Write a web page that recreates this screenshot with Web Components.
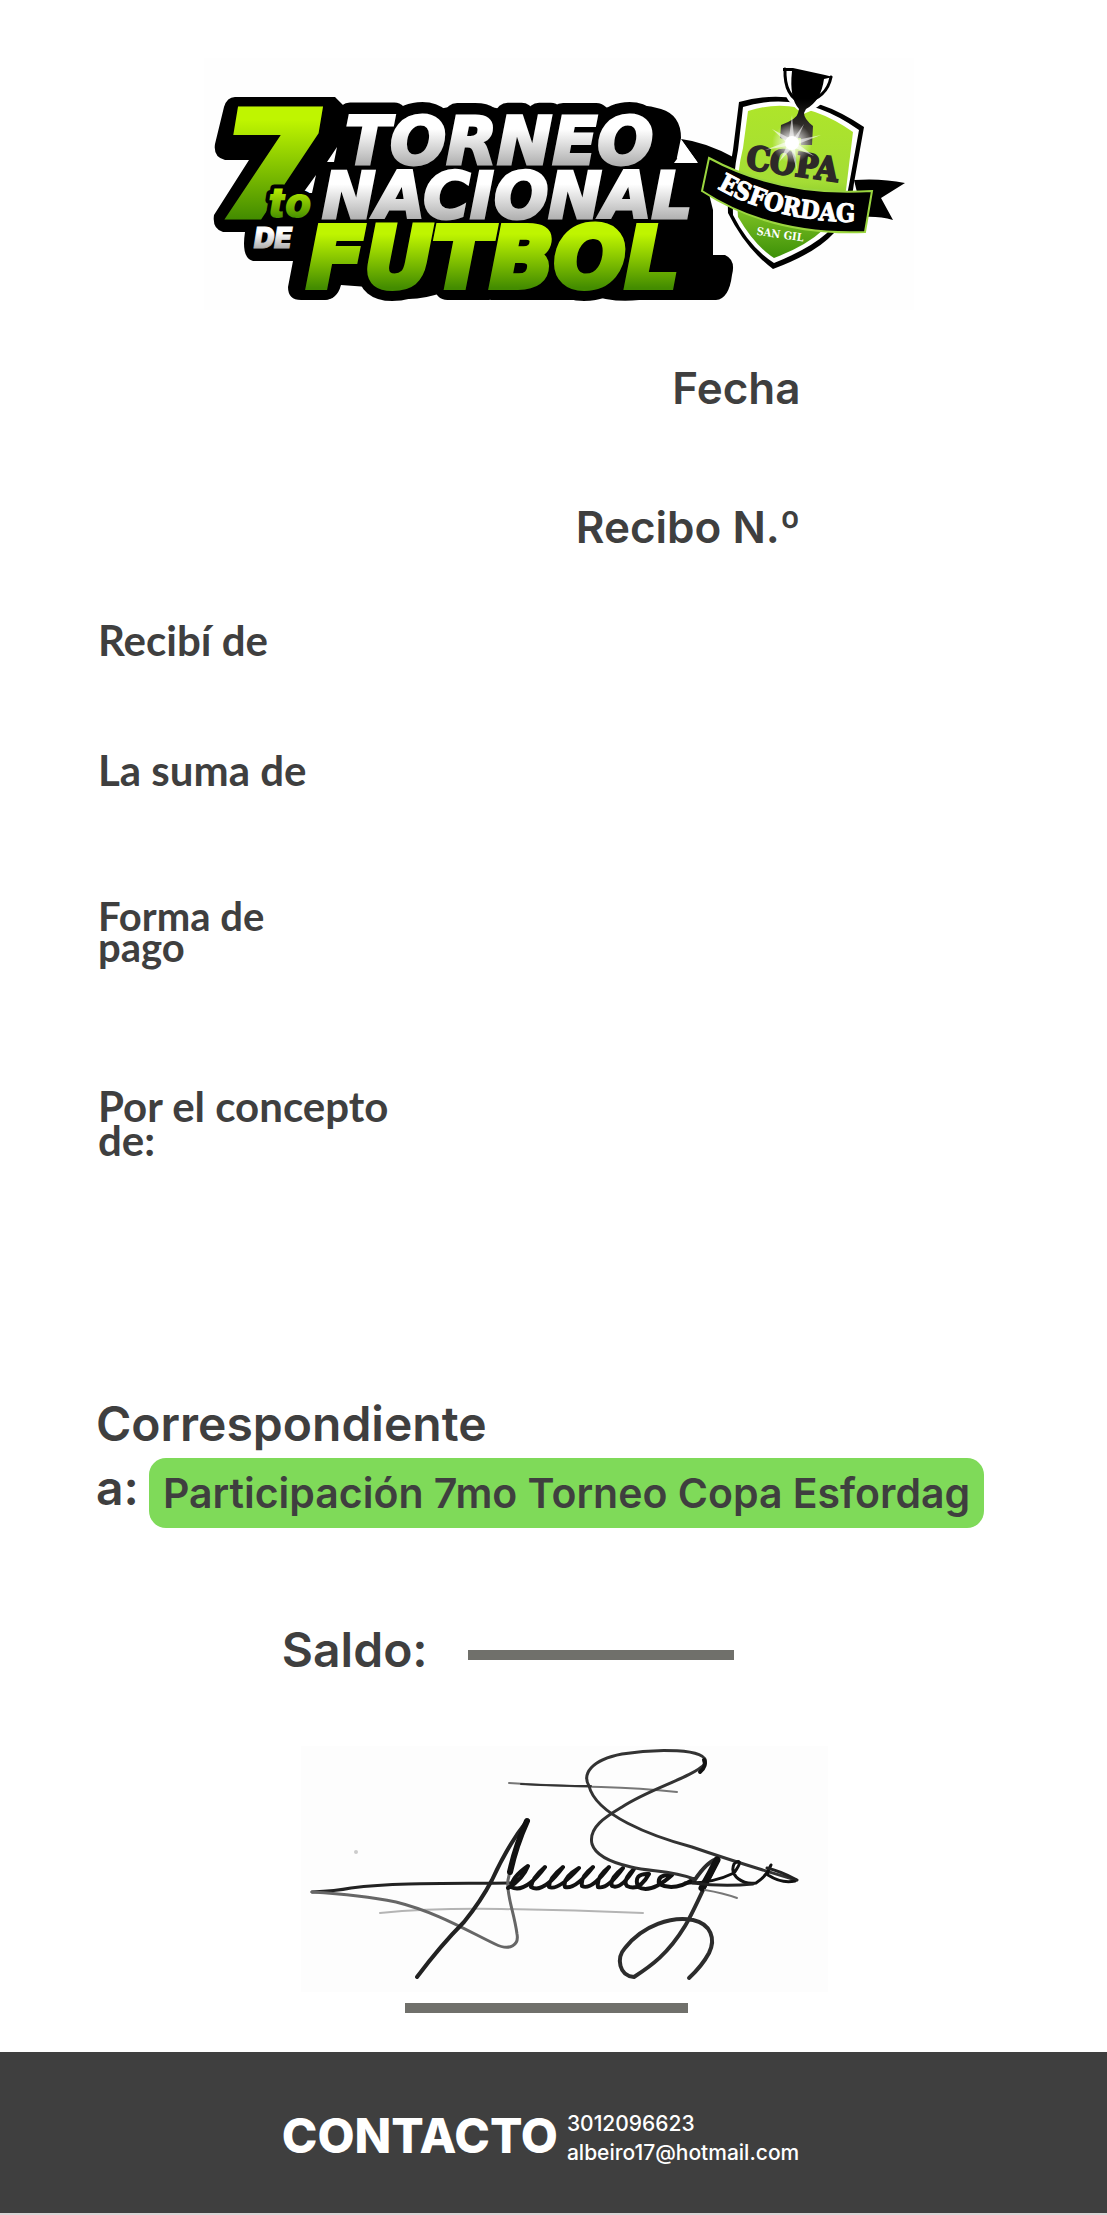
<!DOCTYPE html>
<html lang="es">
<head>
<meta charset="utf-8">
<meta name="viewport" content="width=device-width, initial-scale=1">
<title>Recibo de pago - Copa Esfordag</title>
<style>
body { margin: 0; background: #fff; color: #3f3f3f; font-family: Inter, "Liberation Sans", sans-serif; }
</style>
</head>
<body>
<payment-receipt>
  <tournament-logo slot="logo"></tournament-logo>
  <receipt-meta>
    <span>Fecha</span>
    <span>Recibo N.º</span>
  </receipt-meta>
  <receipt-fields>
    <receipt-label>Recibí de</receipt-label>
    <receipt-label>La suma de</receipt-label>
    <receipt-label class="pay">Forma de<br>pago</receipt-label>
    <receipt-label class="concept">Por el concepto<br>de:</receipt-label>
  </receipt-fields>
  <receipt-subject>
    <span slot="first">Correspondiente</span>
    <span slot="second">a:</span>
    Participación 7mo Torneo Copa Esfordag
  </receipt-subject>
  <receipt-balance>Saldo:</receipt-balance>
  <signature-box></signature-box>
  <contact-bar slot="footer">
    <span slot="title">CONTACTO</span>
    <a slot="phone" href="tel:3012096623">3012096623</a>
    <a slot="mail" href="mailto:albeiro17@hotmail.com">albeiro17@hotmail.com</a>
  </contact-bar>
</payment-receipt>

<script>
const define = (name, html) => {
  const tpl = document.createElement('template');
  tpl.innerHTML = html;
  customElements.define(name, class extends HTMLElement {
    constructor() {
      super();
      this.attachShadow({ mode: 'open' }).append(tpl.content.cloneNode(true));
    }
  });
};

define('payment-receipt', `
<style>
:host { display: flex; flex-direction: column; min-height: 100vh; }
header { display: flex; justify-content: center; padding-top: 50px; }
main { flex: 1; display: flex; flex-direction: column; padding: 44px 96px 39px; }
</style>
<header><slot name="logo"></slot></header>
<main><slot></slot></main>
<slot name="footer"></slot>`);

define('receipt-meta', `
<style>
:host { display: flex; flex-direction: column; align-items: flex-end; gap: 91px;
  width: 77%; font-size: 44px; line-height: 48px; font-weight: 600; }
</style>
<slot></slot>`);

define('receipt-fields', `
<style>
:host { display: flex; flex-direction: column; padding: 65px 0 0 2px; }
::slotted(*) { margin-bottom: 82px; }
::slotted(.pay) { margin: 25px 0 126px; --line: 31px; --size: 40px; }
::slotted(.concept) { margin-bottom: 0; --line: 34px; }
</style>
<slot></slot>`);

define('receipt-label', `
<style>
:host { display: block; font: 700 var(--size, 42px)/var(--line, 48px) Lato, "Liberation Sans", sans-serif; }
</style>
<slot></slot>`);

define('receipt-subject', `
<style>
:host { display: flex; flex-direction: column; gap: 2px; padding-top: 235px; font-weight: 600; }
.lead { font-size: 48px; line-height: 64px; }
.row { display: flex; align-items: flex-start; gap: 10px; }
.mark { font-size: 48px; line-height: 60px; }
.pill { background: #7fda59; border-radius: 17px; padding: 0 14px; font-size: 41px; line-height: 70px; white-space: nowrap; }
</style>
<div class="lead"><slot name="first"></slot></div>
<div class="row"><div class="mark"><slot name="second"></slot></div><div class="pill"><slot></slot></div></div>`);

define('receipt-balance', `
<style>
:host { display: flex; align-items: flex-end; justify-content: center; gap: 40px; width: 90%;
  padding-top: 90px; font-size: 48px; line-height: 64px; font-weight: 600; }
hr { width: 266px; height: 10px; margin: 0 0 22px; border: 0; background: #70706b; }
</style>
<span><slot></slot></span><hr>`);

define('signature-box', `
<style>
:host { display: flex; flex-direction: column; align-items: center; gap: 8px; padding-top: 58px; }
svg { display: block; width: 530px; max-width: 100%; padding-left: 24px; }
hr { width: 283px; height: 10px; margin: 0 14px 0 0; border: 0; background: #70706b; }
</style>
<svg viewBox="300 1740 530 255" fill="none" stroke="#222" stroke-linecap="round" stroke-linejoin="round" role="img" aria-label="Firma">
  <rect x="298" y="1746" width="529" height="246" fill="#fdfdfd" stroke="none"/>
  <circle cx="355" cy="1852" r="2" fill="#ccc" stroke="none"/>
  <path d="M508 1783Q560 1786 600 1787T676 1792" stroke="#777" stroke-width="2"/>
  <path d="M520 1784Q560 1786 590 1786" stroke="#333" stroke-width="2"/>
  <path d="M379 1913Q430 1908 500 1909T642 1913" stroke="#b4b4b4" stroke-width="2"/>
  <path d="M311 1892Q335 1891 350 1888C400 1882 460 1884 512 1883" stroke-width="3"/>
  <path d="M311 1892Q360 1895 395 1902C435 1912 465 1930 494 1944C510 1952 518 1944 516 1934C513 1911 505 1895 507 1880Q513 1850 527 1820" stroke="#666" stroke-width="3"/>
  <path d="M416 1977Q440 1945 463 1922Q480 1901 491 1880C502 1856 514 1836 526 1821" stroke-width="4"/>
  <path d="M526 1821Q515 1845 509 1872" stroke="#111" stroke-width="6"/>
  <path d="M507 1888Q522 1879 527 1866Q511 1877 510 1887Q524 1894 544 1867Q531 1878 530 1887Q542 1894 562 1867Q548 1878 548 1887Q557 1891 578 1868Q561 1878 564 1887Q574 1890 592 1867Q579 1877 581 1886Q590 1891 608 1867Q595 1877 597 1887Q606 1890 622 1868Q608 1879 611 1886Q620 1890 633 1869Q621 1881 626 1886Q638 1892 648 1874Q632 1873 637 1887Q650 1894 671 1875Q656 1874 658 1884Q673 1892 693 1879" stroke="#111" stroke-width="4"/>
  <path d="M693 1879C670 1870 650 1872 630 1867C608 1862 594 1854 591 1844C587 1827 606 1816 621 1807C650 1788 690 1778 704 1764C711 1747 650 1749 621 1754C590 1760 581 1774 588 1786C595 1815 650 1836 691 1847C720 1857 751 1867 795 1880" stroke="#333" stroke-width="3"/>
  <path d="M703 1760Q706 1766 699 1772" stroke="#111" stroke-width="4"/>
  <path d="M693 1881Q707 1860 717 1859Q706 1883 703 1888Q689 1918 684 1926C667 1954 650 1966 633 1977C618 1976 615 1958 624 1948C642 1925 671 1916 692 1920C710 1924 715 1939 708 1953Q701 1966 688 1978" stroke="#2c2c2c" stroke-width="4"/>
  <path d="M716 1860Q709 1874 701 1888" stroke="#111" stroke-width="7"/>
  <path d="M684 1883Q710 1884 733 1873C742 1861 738 1859 733 1864C728 1876 742 1885 755 1883Q766 1876 770 1865Q766 1872 767 1875Q781 1884 794 1881" stroke="#111" stroke-width="3"/>
  <path d="M692 1883Q722 1887 752 1884M766 1868Q779 1871 796 1880" stroke="#222" stroke-width="3"/>
  <path d="M704 1890Q722 1893 736 1898" stroke="#777" stroke-width="2"/>
</svg>
<hr>`);

define('contact-bar', `
<style>
:host { display: flex; align-items: center; justify-content: center; gap: 9px; height: 155px;
  padding: 6px 26px 0 0; background: #3f3f3f; border-bottom: 2px solid #d9d5d6; color: #fff; }
.title { font-size: 48px; line-height: 56px; font-weight: 800; }
.lines { display: flex; flex-direction: column; padding-top: 4px; font-size: 21px; line-height: 29px; font-weight: 500; }
::slotted(a) { color: inherit; text-decoration: none; }
</style>
<div class="title"><slot name="title"></slot></div>
<div class="lines"><slot name="phone"></slot><slot name="mail"></slot></div>`);

define('tournament-logo', `
<style>
:host { display: block; width: 710px; max-width: 100%; }
svg { display: block; width: 100%; overflow: visible; }
.wide { font-family: "DejaVu Sans", Inter, sans-serif; font-weight: 700; font-style: italic; }
.black { font-family: Inter, sans-serif; font-weight: 900; font-style: italic; }
.slab { font-family: "DejaVu Serif Condensed", "DejaVu Serif", serif; font-weight: 700; }
.shade { fill: #000; stroke: #000; stroke-width: 26; stroke-linejoin: round; }
</style>
<svg viewBox="198 50 710 270" role="img" aria-label="7to Torneo Nacional de Futbol, Copa Esfordag San Gil">
  <defs>
    <linearGradient id="seven" gradientUnits="userSpaceOnUse" x1="0" x2="0" y1="109" y2="219"><stop offset="0.1" stop-color="#bff500"/><stop offset="1" stop-color="#438c00"/></linearGradient>
    <linearGradient id="to" gradientUnits="userSpaceOnUse" x1="0" x2="0" y1="190" y2="219"><stop offset="0" stop-color="#b2e900"/><stop offset="1" stop-color="#438c00"/></linearGradient>
    <linearGradient id="fut" gradientUnits="userSpaceOnUse" x1="0" x2="0" y1="228" y2="288"><stop offset="0.1" stop-color="#bff500"/><stop offset="1" stop-color="#438c00"/></linearGradient>
    <linearGradient id="s1" gradientUnits="userSpaceOnUse" x1="0" x2="0" y1="120" y2="166"><stop offset="0.2" stop-color="#fff"/><stop offset="1" stop-color="#adadad"/></linearGradient>
    <linearGradient id="s2" gradientUnits="userSpaceOnUse" x1="0" x2="0" y1="175" y2="221"><stop offset="0.2" stop-color="#fff"/><stop offset="1" stop-color="#adadad"/></linearGradient>
    <linearGradient id="s3" gradientUnits="userSpaceOnUse" x1="0" x2="0" y1="228" y2="249"><stop offset="0.2" stop-color="#fff"/><stop offset="1" stop-color="#adadad"/></linearGradient>
    <linearGradient id="field" x1="0" x2="0" y1="0" y2="1"><stop offset="0" stop-color="#aee52a"/><stop offset="0.5" stop-color="#a4dd35"/><stop offset="1" stop-color="#3d9108"/></linearGradient>
    <linearGradient id="cup" x1="0" x2="0" y1="0" y2="1"><stop offset="0.4" stop-color="#000"/><stop offset="1" stop-color="#55504a"/></linearGradient>
    <radialGradient id="glow"><stop offset="0" stop-color="#fff"/><stop offset="0.3" stop-color="#fff" stop-opacity="0.75"/><stop offset="1" stop-color="#fff" stop-opacity="0"/></radialGradient>
    <path id="band" d="M716 188Q775 222 857 222"/>
  </defs>
  <rect x="203" y="58" width="710" height="252" fill="#fefefe"/>
  <path d="M680 139Q705 142 734 158L728 200L700 195L697 163Z"/>
  <use href="#word1" class="shade"/>
  <use href="#word2" class="shade"/>
  <use href="#word3" class="shade"/>
  <path d="M234 97H334L344 107H390L400 109Q415 103 438 109L448 107H490L500 109L510 107H600L620 109Q640 102 660 109Q680 115 680 138L675 162H700L712 210V255H724Q735 260 731 275Q728 299 715 300H660L652 297Q620 306 586 294Q580 300 572 300H500L494 294L488 300H450L443 292Q400 308 367 287L340 285Q336 300 323 300H300Q287 300 287 287L292 261H252Q240 258 244 232H222Q211 229 213 215L248 160H224Q212 157 214 144L223 107Q226 97 234 97Z"/>
  <path d="M681 141L697 163H673Q680 155 681 141ZM336 147L326 162H333ZM315 175L302 193H311Z" fill="#fff"/>
  <g fill="url(#s1)" stroke="url(#s1)" stroke-width="3"><text id="word1" class="wide" x="344" y="164" font-size="66">TORNEO</text></g>
  <g fill="url(#s2)" stroke="url(#s2)" stroke-width="3"><text id="word2" class="wide" x="321" y="218" font-size="64">NACIONAL</text></g>
  <g fill="url(#fut)" stroke="url(#fut)" stroke-width="6"><text id="word3" class="wide" x="306" y="287" font-size="84">FUTBOL</text></g>
  <g class="black">
    <text x="253" y="248" font-size="28" fill="url(#s3)" stroke="url(#s3)">DE</text>
    <text x="224" y="217" font-size="148" fill="url(#seven)" stroke="url(#seven)" stroke-width="5">7</text>
    <text x="267" y="218" font-size="43" fill="url(#to)" stroke="#000" stroke-width="8" stroke-linejoin="round" paint-order="stroke">to</text>
  </g>
  <path d="M853 180Q880 178 904 183L880 198L892 220Q878 216 862 217Z"/>
  <path d="M738 102Q800 84 863 127L853 183Q850 210 833 233Q815 253 772 269Q745 249 727 213Q726 180 732 150Z"/>
  <path d="M742 107Q800 89 858 130L848 185Q843 215 826 233Q808 249 773 263Q748 247 732 215Q731 180 737 150Z" fill="#fff"/>
  <path d="M747 111Q798 94 852 132L845 190Q836 218 822 230Q805 246 773 258Q754 246 737 217Q734 180 742 148Z" fill="url(#field)"/>
  <g stroke="#fff" stroke-linecap="round">
    <path d="M783 69Q781 96 803 110Q827 101 831 78" fill="none" stroke-width="7"/>
    <path d="M784 69Q783 97 802 103Q826 98 830 77" fill="none" stroke="#000" stroke-width="3"/>
  </g>
  <path d="M782 68L792 68L824 75L832 77L823 79Q820 101 805 109L803 113Q803 119 812 126L811 145H800V138H789L787 141L779 138L780 125Q796 119 797 113L798 109Q788 98 791 71L782 71Z" fill="url(#cup)"/>
  <text class="slab" font-size="33" fill="#2d2928" stroke="#2d2928" stroke-width="2" transform="rotate(8 745 170)" x="744" y="169">COPA</text>
  <g transform="translate(791 143)">
    <circle r="20" fill="url(#glow)"/>
    <path d="M0-28L2-5L12-19L5-3L29-8L6 1L22 13L3 5L5 28L-1 6L-13 19L-5 3L-27 7L-6-1L-20-14L-3-5Z" fill="#fff" opacity="0.600"/>
    <circle r="7" fill="#fff"/>
  </g>
  <path d="M708 158Q780 197 871 191L864 232Q770 236 701 191Z" fill="#000" stroke="#9bd63f" stroke-width="2"/>
  <text class="slab" font-size="25" fill="#fff" stroke="#fff"><textPath href="#band">ESFORDAG</textPath></text>
  <text class="slab" font-size="11" fill="#fff" transform="rotate(8 756 236)" x="755" y="235">SAN GIL</text>
</svg>`);
</script>
</body>
</html>
